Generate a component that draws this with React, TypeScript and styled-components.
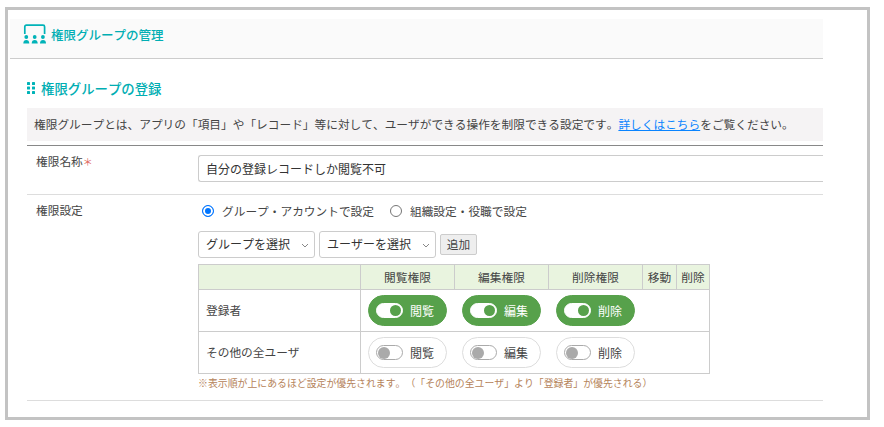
import React from 'react';
import styled, { createGlobalStyle } from 'styled-components';

const GlobalStyle = createGlobalStyle`
	html, body {
		margin: 0;
		padding: 0;
		background: #fff;
	}
	body {
		font-family: 'Noto Sans CJK JP', 'Noto Sans', sans-serif;
		color: #444;
		font-size: 11.7px;
		text-spacing-trim: space-all;
		font-kerning: none;
	}
`;

interface Perm {
	label: string;
	on: boolean;
}

const headers = ['閲覧権限', '編集権限', '削除権限'];

const rows: { name: string; perms: Perm[] }[] = [
	{
		name: '登録者',
		perms: [
			{ label: '閲覧', on: true },
			{ label: '編集', on: true },
			{ label: '削除', on: true },
		],
	},
	{
		name: 'その他の全ユーザ',
		perms: [
			{ label: '閲覧', on: false },
			{ label: '編集', on: false },
			{ label: '削除', on: false },
		],
	},
];

function App() {
	return (
		<>
			<GlobalStyle />
			<Frame>
				<Inner>
					<PageHeader>
						<svg width="24" height="21" viewBox="0 0 24 21">
							<path d="M1.800 10V2.800C1.800 1.800 2.400 1.200 3.400 1.200H20C21 1.200 21.600 1.800 21.600 2.800V10" fill="none" stroke="#00b3b8" strokeWidth="1.700" />
							<circle cx="3.300" cy="13" r="1.900" fill="#00b3b8" />
							<circle cx="11.700" cy="13" r="1.900" fill="#00b3b8" />
							<circle cx="19.900" cy="13" r="1.900" fill="#00b3b8" />
							<path d="M.3 19.500C.3 17 1.500 16 3.300 16C5.100 16 6.300 17 6.300 19.500Z" fill="#00b3b8" />
							<path d="M8.700 19.500C8.700 17 9.900 16 11.700 16C13.500 16 14.700 17 14.700 19.500Z" fill="#00b3b8" />
							<path d="M17 19.500C17 17 18.200 16 20 16C21.800 16 23 17 23 19.500Z" fill="#00b3b8" />
						</svg>
						<PageTitle>権限グループの管理</PageTitle>
					</PageHeader>
					<Body>
						<SectionTitle>
							<svg width="8" height="12" viewBox="0 0 8 12">
								<rect x="0" y="0" width="3" height="3" rx=".6" fill="#00b3b8" />
								<rect x="5" y="0" width="3" height="3" rx=".6" fill="#00b3b8" />
								<rect x="0" y="4.500" width="3" height="3" rx=".6" fill="#00b3b8" />
								<rect x="5" y="4.500" width="3" height="3" rx=".6" fill="#00b3b8" />
								<rect x="0" y="9" width="3" height="3" rx=".6" fill="#00b3b8" />
								<rect x="5" y="9" width="3" height="3" rx=".6" fill="#00b3b8" />
							</svg>
							権限グループの登録
						</SectionTitle>
						<Notice>
							権限グループとは、アプリの「項目」や「レコード」等に対して、ユーザができる操作を制限できる設定です。
							<NoticeLink href="#">詳しくはこちら</NoticeLink>をご覧ください。
						</Notice>
						<FormRow>
							<RowLabel>
								権限名称<Required>＊</Required>
							</RowLabel>
							<NameInput readOnly value="自分の登録レコードしか閲覧不可" />
						</FormRow>
						<SettingsRow>
							<RowLabel>権限設定</RowLabel>
							<SettingsBody>
								<RadioRow>
									<RadioLabel>
										<Radio $checked />
										<RadioText>グループ・アカウントで設定</RadioText>
									</RadioLabel>
									<RadioLabel>
										<Radio />
										<RadioText>組織設定・役職で設定</RadioText>
									</RadioLabel>
								</RadioRow>
								<SelectRow>
									<FakeSelect>
										グループを選択
										<Caret width="8" height="5" viewBox="0 0 8 5">
											<path d="M1 1L4 4L7 1" fill="none" stroke="#888" strokeWidth="1" />
										</Caret>
									</FakeSelect>
									<FakeSelect>
										ユーザーを選択
										<Caret width="8" height="5" viewBox="0 0 8 5">
											<path d="M1 1L4 4L7 1" fill="none" stroke="#888" strokeWidth="1" />
										</Caret>
									</FakeSelect>
									<AddButton>追加</AddButton>
								</SelectRow>
								<PermTable>
									<thead>
										<tr>
											<HeadCell $width={162} />
											{headers.map((h) => (
												<HeadCell key={h} $width={94}>
													{h}
												</HeadCell>
											))}
											<HeadCell $width={34}>移動</HeadCell>
											<HeadCell $width={33}>削除</HeadCell>
										</tr>
									</thead>
									<tbody>
										{rows.map((row) => (
											<tr key={row.name}>
												<NameCell>{row.name}</NameCell>
												<PermCell colSpan={5}>
													<PermList>
														{row.perms.map((perm) => (
															<PermToggle key={perm.label} $on={perm.on}>
																<Track $on={perm.on}>
																	<Knob $on={perm.on} />
																</Track>
																{perm.label}
															</PermToggle>
														))}
													</PermList>
												</PermCell>
											</tr>
										))}
									</tbody>
								</PermTable>
								<Note>※表示順が上にあるほど設定が優先されます。（「その他の全ユーザ」より「登録者」が優先される）</Note>
							</SettingsBody>
						</SettingsRow>
					</Body>
				</Inner>
			</Frame>
		</>
	);
}

const Frame = styled.div`
	box-sizing: border-box;
	width: 865px;
	height: 413px;
	margin: 7px 0 0 5px;
	border: 3px solid #c3c3c3;
	overflow: hidden;
`;

const Inner = styled.div`
	width: 813px;
	margin: 9px 0 0 2px;
`;

const PageHeader = styled.div`
	display: flex;
	align-items: center;
	gap: 4px;
	height: 40px;
	box-sizing: border-box;
	padding: 0 0 8px 13px;
	background: #fafafa;
	border-bottom: 1px solid #ccc;
`;

const PageTitle = styled.div`
	color: #00aeb3;
	font-size: 12.5px;
	font-weight: 500;
`;

const Body = styled.div`
	padding: 19px 0 0 17px;
`;

const SectionTitle = styled.div`
	display: flex;
	align-items: center;
	gap: 6px;
	height: 20px;
	color: #00aeb3;
	font-size: 13.4px;
	font-weight: 500;
`;

const Notice = styled.div`
	height: 33px;
	line-height: 31px;
	margin-top: 10px;
	padding-left: 7px;
	background: #f5f3f4;
	white-space: nowrap;
`;

const NoticeLink = styled.a`
	color: #0a84ff;
`;

const FormRow = styled.div`
	display: flex;
	height: 50px;
	margin-top: 4px;
	border-top: 1px solid #888;
	border-bottom: 1px solid #ddd;
	box-sizing: border-box;
`;

const RowLabel = styled.div`
	width: 171px;
	flex: none;
	padding: 6px 0 0 9px;
	box-sizing: border-box;
`;

const Required = styled.span`
	color: #e0685f;
	font-size: 10px;
`;

const NameInput = styled.input`
	flex: 1;
	min-width: 0;
	height: 27px;
	margin-top: 9px;
	padding: 0 7px;
	box-sizing: border-box;
	border: 1px solid #ccc;
	border-right: 0;
	border-radius: 3px 0 0 3px;
	font-family: inherit;
	font-size: 12px;
	color: #333;
	outline: none;
`;

const SettingsRow = styled.div`
	display: flex;
	height: 206px;
	box-sizing: border-box;
	border-bottom: 1px solid #ddd;
`;

const SettingsBody = styled.div`
	display: flex;
	flex-direction: column;
	padding-top: 6px;
`;

const RadioRow = styled.div`
	display: flex;
	gap: 16px;
	height: 20px;
	align-items: center;
	padding-left: 4px;
`;

const RadioLabel = styled.div`
	display: flex;
	align-items: center;
	gap: 8px;
`;

const RadioText = styled.span`
	margin-top: -2px;
`;

const Radio = styled.span<{ $checked?: boolean }>`
	width: 12px;
	height: 12px;
	box-sizing: border-box;
	border-radius: 50%;
	border: 1px solid ${({ $checked }) => ($checked ? '#0075ff' : '#767676')};
	background: ${({ $checked }) => ($checked ? '#0075ff' : '#fff')};
	box-shadow: ${({ $checked }) => ($checked ? 'inset 0 0 0 2px #fff' : 'none')};
`;

const SelectRow = styled.div`
	display: flex;
	align-items: center;
	gap: 4px;
	margin-top: 10px;
`;

const FakeSelect = styled.div`
	position: relative;
	width: 117px;
	height: 27px;
	line-height: 23px;
	box-sizing: border-box;
	padding-left: 7px;
	border: 1px solid #ccc;
	border-radius: 3px;
	font-size: 12px;
	color: #333;
`;

const Caret = styled.svg`
	position: absolute;
	right: 5px;
	top: 11px;
`;

const AddButton = styled.div`
	width: 37px;
	height: 21px;
	line-height: 18px;
	box-sizing: border-box;
	text-align: center;
	background: #eee;
	border: 1px solid #ccc;
	border-radius: 2px;
`;

const PermTable = styled.table`
	width: 511px;
	margin-top: 6px;
	border-collapse: collapse;
	table-layout: fixed;
`;

const HeadCell = styled.th<{ $width: number }>`
	box-sizing: border-box;
	width: ${({ $width }) => $width}px;
	height: 25px;
	padding: 0 0 2px;
	background: #e9f4df;
	border: 1px solid #ccc;
	font-weight: 400;
	white-space: nowrap;
`;

const NameCell = styled.td`
	box-sizing: border-box;
	padding: 0 0 3px 7px;
	border: 1px solid #ccc;
`;

const PermCell = styled.td`
	padding: 5px 0 5px 7px;
	border: 1px solid #ccc;
`;

const PermList = styled.div`
	display: flex;
	gap: 15px;
`;

const PermToggle = styled.div<{ $on: boolean }>`
	display: flex;
	align-items: center;
	gap: 7px;
	width: 79px;
	height: 31px;
	box-sizing: border-box;
	padding-left: 7px;
	border-radius: 16px;
	border: 1px solid ${({ $on }) => ($on ? '#57a14b' : '#ddd')};
	background: ${({ $on }) => ($on ? '#57a14b' : '#fff')};
	color: ${({ $on }) => ($on ? '#fff' : '#444')};
	font-size: 12px;
`;

const Track = styled.span<{ $on: boolean }>`
	display: flex;
	align-items: center;
	justify-content: ${({ $on }) => ($on ? 'flex-end' : 'flex-start')};
	width: 27px;
	height: 15px;
	box-sizing: border-box;
	padding: 0 1px;
	border-radius: 8px;
	background: #fff;
	border: 1px solid ${({ $on }) => ($on ? '#fff' : '#aaa')};
`;

const Knob = styled.span<{ $on: boolean }>`
	width: ${({ $on }) => ($on ? 11 : 12)}px;
	height: ${({ $on }) => ($on ? 11 : 12)}px;
	border-radius: 50%;
	background: ${({ $on }) => ($on ? '#57a14b' : '#aaa')};
`;

const Note = styled.div`
	margin-top: 2px;
	font-size: 9.9px;
	color: #b5835a;
	white-space: nowrap;
`;

export default App;
